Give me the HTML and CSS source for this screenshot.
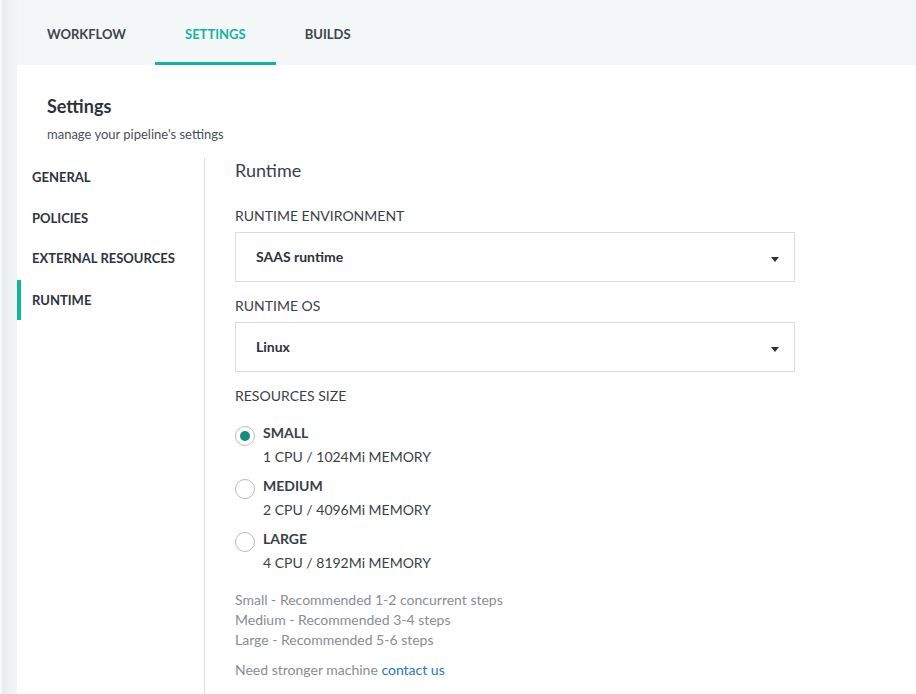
FILE: index.html
```html
<!DOCTYPE html>
<html>
<head>
<meta charset="utf-8">
<link rel="stylesheet" href="styles.css">
</head>
<body>
<div class="app">
  <div class="edge"></div>
  <div class="main">
    <nav class="tabs">
      <a class="tab first">WORKFLOW</a>
      <a class="tab active">SETTINGS</a>
      <a class="tab last">BUILDS</a>
    </nav>
    <div class="panel">
      <div class="page-head">
        <h1 class="title">Settings</h1>
        <p class="subtitle">manage your pipeline's settings</p>
      </div>
      <div class="body">
        <ul class="side">
          <li class="side-item">GENERAL</li>
          <li class="side-item">POLICIES</li>
          <li class="side-item">EXTERNAL RESOURCES</li>
          <li class="side-item active">RUNTIME</li>
        </ul>
        <section class="content">
          <h2 class="section-title">Runtime</h2>
          <div class="field">
            <div class="label">RUNTIME ENVIRONMENT</div>
            <div class="select"><span>SAAS runtime</span><span class="caret"></span></div>
          </div>
          <div class="field">
            <div class="label">RUNTIME OS</div>
            <div class="select"><span>Linux</span><span class="caret"></span></div>
          </div>
          <div class="label size-label">RESOURCES SIZE</div>
          <div class="radios">
            <div class="radio checked">
              <span class="dot"></span>
              <div class="radio-text"><div class="radio-name">SMALL</div><div class="radio-desc">1 CPU / 1024Mi MEMORY</div></div>
            </div>
            <div class="radio">
              <span class="dot"></span>
              <div class="radio-text"><div class="radio-name">MEDIUM</div><div class="radio-desc">2 CPU / 4096Mi MEMORY</div></div>
            </div>
            <div class="radio">
              <span class="dot"></span>
              <div class="radio-text"><div class="radio-name">LARGE</div><div class="radio-desc">4 CPU / 8192Mi MEMORY</div></div>
            </div>
          </div>
          <div class="notes">
            <div>Small - Recommended 1-2 concurrent steps</div>
            <div>Medium - Recommended 3-4 steps</div>
            <div>Large - Recommended 5-6 steps</div>
          </div>
          <div class="contact">Need stronger machine <a class="link">contact us</a></div>
        </section>
      </div>
    </div>
  </div>
</div>
</body>
</html>
```
FILE: styles.css
```css
* { box-sizing: border-box; }
html, body { margin: 0; padding: 0; height: 100%; }
body {
  font-family: Lato, "Open Sans", sans-serif;
  color: #333;
  background: #fff;
}
.app { display: flex; height: 694px; overflow: hidden; }
.edge {
  width: 17px;
  flex: none;
  border-left: 2px solid #f7f9f9;
  background: linear-gradient(to right, #e9eded, #f2f5f5);
}
.main { flex: 1; display: flex; flex-direction: column; }
.tabs {
  height: 65px;
  flex: none;
  background: #f4f7f7;
  display: flex;
  align-items: stretch;
}
.tab {
  padding: 5px 30px 0;
  display: flex;
  align-items: center;
  font-size: 13px;
  font-weight: 700;
  color: #3f444c;
  border-bottom: 3px solid transparent;
}
.tab.first { padding-right: 29px; }
.tab.last { padding-left: 29px; }
.tab.active { color: #13b5a0; border-bottom-color: #13b5a0; }
.panel { flex: 1; background: #fff; display: flex; flex-direction: column; }
.page-head { padding: 30px 30px 0; }
.title {
  margin: 0;
  font-size: 18px;
  font-weight: 700;
  color: #2c323a;
  line-height: 22px;
}
.subtitle {
  margin: 8px 0 0;
  font-size: 13px;
  color: #4a4f57;
  line-height: 18px;
}
.body { display: flex; flex: 1; margin-top: 15px; }
.side {
  list-style: none;
  margin: 0;
  padding: 0;
  width: 188px;
  flex: none;
  border-right: 1px solid #dedede;
}
.side-item {
  height: 40.5px;
  display: flex;
  align-items: center;
  padding-left: 11px;
  padding-bottom: 2px;
  font-size: 13px;
  font-weight: 700;
  color: #2d3440;
  border-left: 4px solid transparent;
}
.side-item.active { border-left-color: #13b5a0; padding-bottom: 0; }
.content { padding: 0 30px; flex: 1; }
.section-title {
  margin: 0;
  font-size: 18px;
  font-weight: 400;
  color: #3a3f47;
  line-height: 24px;
}
.label {
  font-size: 14px;
  color: #3a3f47;
  line-height: 18px;
}
.field .label { margin-top: 25px; }
.field + .field .label { margin-top: 15px; }
.size-label { margin-top: 15px; }
.select {
  margin-top: 7px;
  width: 560px;
  height: 50px;
  border: 1px solid #dcdcdc;
  display: flex;
  align-items: center;
  justify-content: space-between;
  padding: 0 15px 0 20px;
  font-size: 14px;
  font-weight: 700;
  color: #2c323a;
}
.select span:first-child { margin-top: -1px; }
.caret {
  width: 0; height: 0;
  border-left: 4px solid transparent;
  border-right: 4px solid transparent;
  border-top: 5px solid #2c323a;
  margin-top: 4px;
}
.radios { margin-top: 19px; display: flex; flex-direction: column; gap: 11px; }
.radio { display: flex; align-items: flex-start; gap: 8px; }
.dot {
  width: 20px; height: 20px;
  border-radius: 50%;
  border: 1px solid #b8bcc2;
  flex: none;
  margin-top: 2px;
  position: relative;
  background: #fff;
}
.radio.checked .dot::after {
  content: "";
  position: absolute;
  left: 4px; top: 4px;
  width: 10px; height: 10px;
  border-radius: 50%;
  background: #0f8f7c;
}
.radio-name { font-size: 14px; font-weight: 700; color: #3a3f47; line-height: 18px; }
.radio-desc { font-size: 14px; color: #3a3f47; line-height: 18px; margin-top: 6px; }
.notes {
  margin-top: 18px;
  font-size: 14px;
  color: #8a8d91;
  line-height: 20px;
}
.contact {
  margin-top: 10px;
  font-size: 14px;
  color: #8a8d91;
  line-height: 20px;
}
.link { color: #2a74c5; }
```
